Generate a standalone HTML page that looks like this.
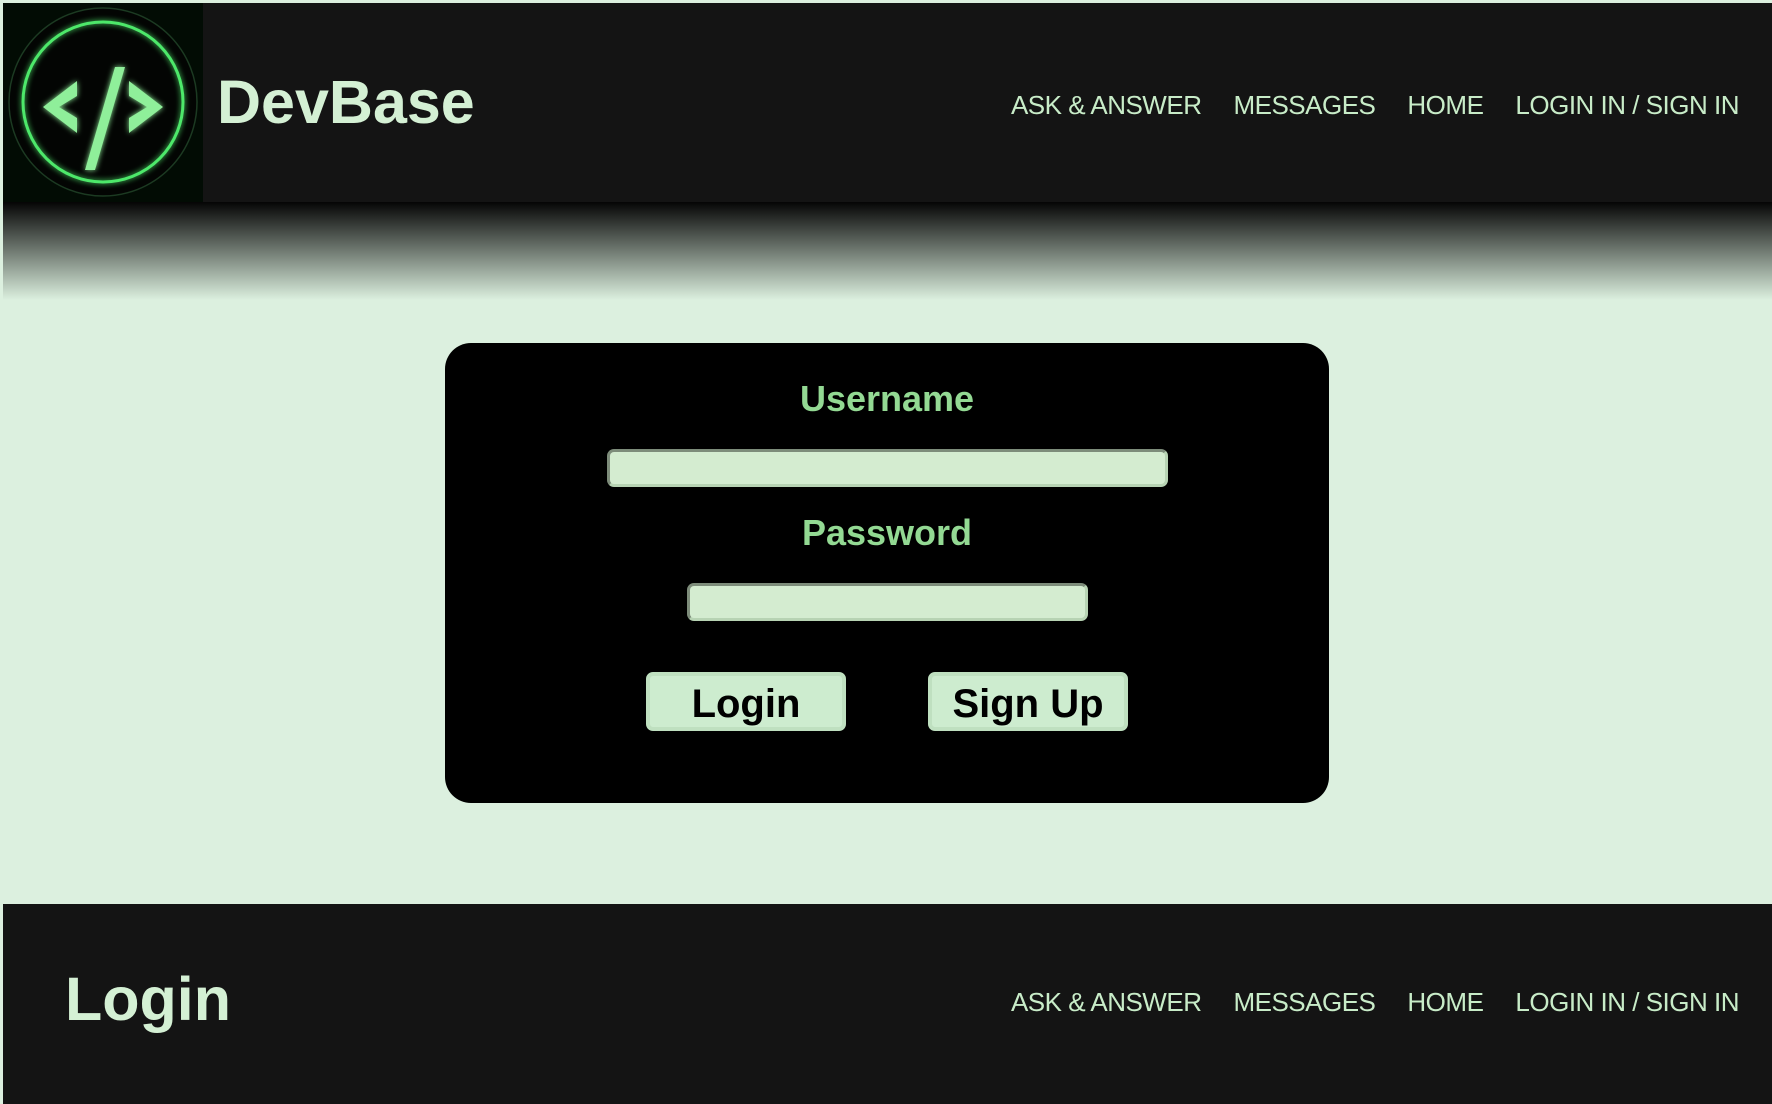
<!DOCTYPE html>
<html><head><meta charset="utf-8"><style>
*{margin:0;padding:0;box-sizing:border-box}
body{width:1772px;height:1104px;background:#dcf0df;position:relative;overflow:hidden;font-family:"Liberation Sans",sans-serif}
.hdr{position:absolute;left:3px;top:3px;right:0;height:199px;background:#141414}
.grad{position:absolute;left:3px;top:202px;right:0;height:98px;background:linear-gradient(#050505,#dcf0df)}
.logo{position:absolute;left:0;top:0;width:200px;height:199px;background:#020c04}
.brand{position:absolute;left:214px;top:64px;font-size:61px;font-weight:bold;color:#d4f0d4}
.nav{position:absolute;right:33px;display:flex;gap:32px;font-size:26px;color:#c8ecc8;letter-spacing:-0.5px}
.ftr{position:absolute;left:3px;top:904px;right:0;bottom:0;background:#141414}
.ftitle{position:absolute;left:62px;top:60px;font-size:61px;font-weight:bold;color:#d4f0d4}
.card{position:absolute;left:445px;top:343px;width:884px;height:460px;background:#000;border-radius:26px}
.lbl{position:absolute;left:0;width:100%;text-align:center;font-size:36px;font-weight:bold;color:#93d993}
.inp{position:absolute;background:#d4ecd0;border:3px solid #7d8c7a;border-bottom-color:#b7d3b3;border-right-color:#b7d3b3;border-radius:7px}
.btn{position:absolute;top:329px;width:200px;height:59px;background:#cdeccf;border:4px solid #bfe0c0;border-radius:7px;font-size:40px;font-weight:bold;color:#000;text-align:center;line-height:57px}
</style></head><body>
<div class="hdr">
 <div class="logo">
  <svg width="200" height="199" viewBox="0 0 200 199">
   <defs><filter id="g"><feGaussianBlur stdDeviation="3" result="b"/><feMerge><feMergeNode in="b"/><feMergeNode in="SourceGraphic"/></feMerge></filter></defs>
   <circle cx="100" cy="99" r="94" fill="#030503" stroke="#1c3a22" stroke-width="1.5"/>
   <circle cx="100" cy="99" r="80" fill="none" stroke="#4ee86a" stroke-width="3" filter="url(#g)"/>
   <g fill="#8fef9a" filter="url(#g)">
    <polygon points="40,104 74,78 74,93 56,104 74,115 74,130"/>
    <polygon points="160,104 126,78 126,93 144,104 126,115 126,130"/>
    <polygon points="112,64 122,64 92,167 82,167"/>
   </g>
  </svg>
 </div>
 <div class="brand">DevBase</div>
 <div class="nav" style="top:87px"><span>ASK &amp; ANSWER</span><span>MESSAGES</span><span>HOME</span><span>LOGIN IN / SIGN IN</span></div>
</div>
<div class="grad"></div>
<div class="card">
 <div class="lbl" style="top:35px">Username</div>
 <div class="inp" style="left:162px;top:106px;width:561px;height:38px"></div>
 <div class="lbl" style="top:169px">Password</div>
 <div class="inp" style="left:242px;top:240px;width:401px;height:38px"></div>
 <div class="btn" style="left:201px">Login</div>
 <div class="btn" style="left:483px">Sign Up</div>
</div>
<div class="ftr">
 <div class="ftitle">Login</div>
 <div class="nav" style="top:83px"><span>ASK &amp; ANSWER</span><span>MESSAGES</span><span>HOME</span><span>LOGIN IN / SIGN IN</span></div>
</div>
</body></html>
